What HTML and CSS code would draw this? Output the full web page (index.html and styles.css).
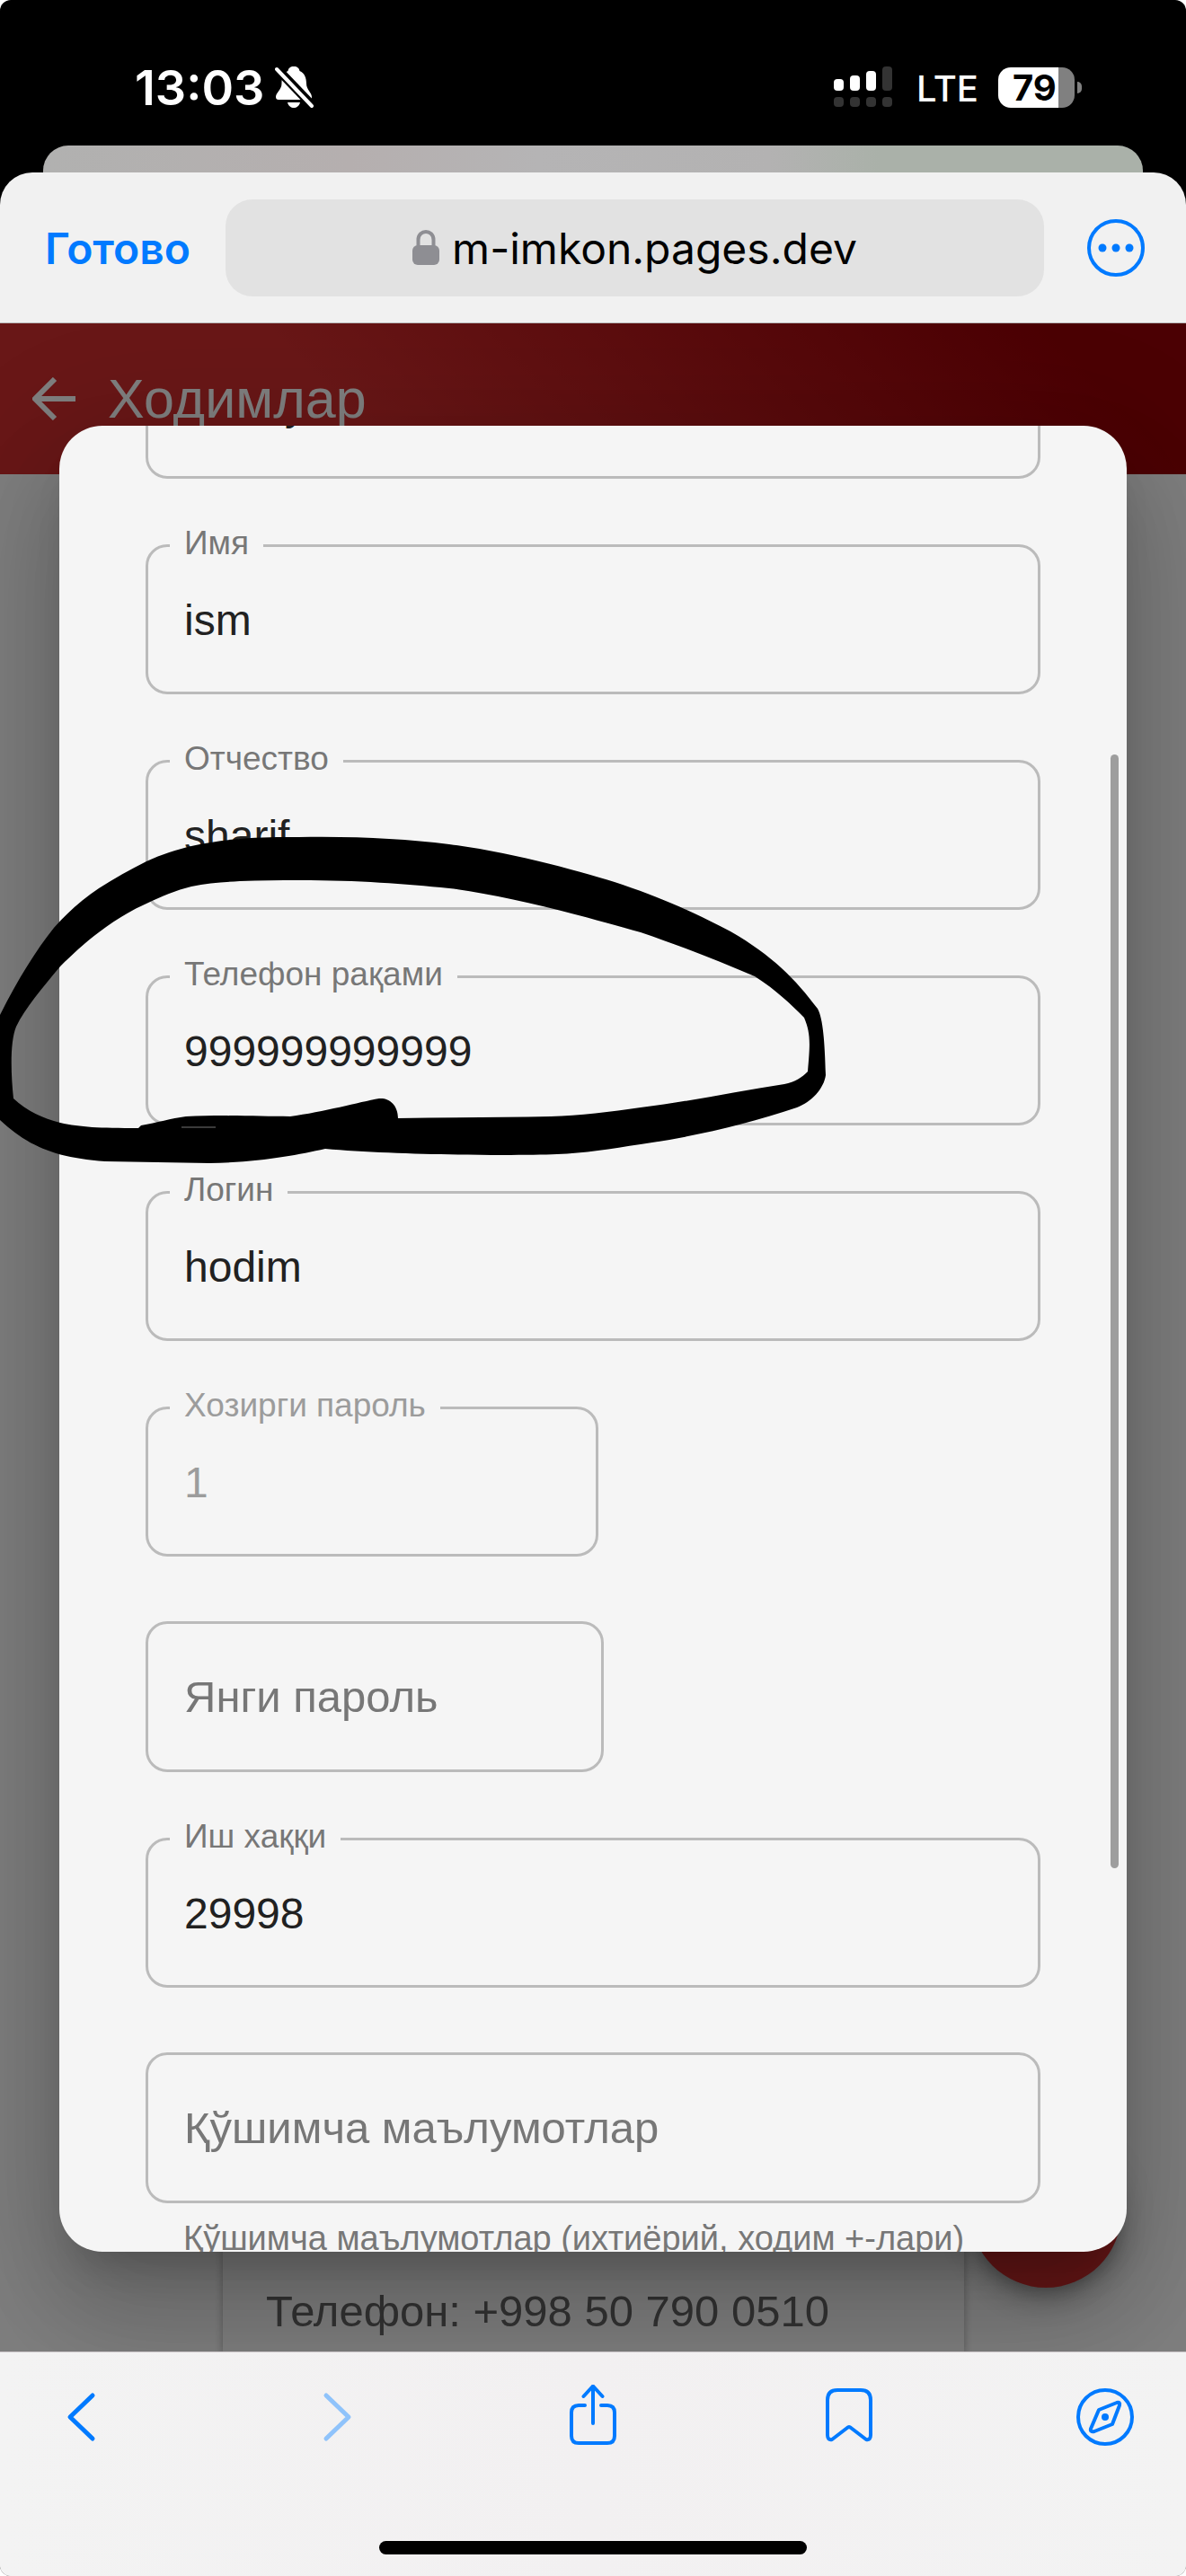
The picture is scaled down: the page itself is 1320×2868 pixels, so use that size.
FILE: index.html
```html
<!DOCTYPE html>
<html lang="uz-Cyrl">
<head>
<meta charset="utf-8">
<meta name="viewport" content="width=device-width, initial-scale=1">
<title>Ходимлар</title>
<link rel="stylesheet" href="styles.css">
</head>
<body>
<div class="phone">
  <header class="status">
    <div class="status-side">
      <span class="clock">13:03</span>
      <svg class="bell" width="44" height="48" viewBox="0 0 44 48" aria-hidden="true">
        <path fill="#fff" d="M21 1c-4 0-6 2-6.500 5C9 8 7.500 14 7.500 20c0 7-6.500 10-6.500 15 0 2 1 3 3 3h34c2 0 3-1 3-3 0-5-6-8-6-15 0-6-2-12-7.500-14C27 3 25 1 21 1zM14 41h14c-1 4-4 6-7 6s-6-2-7-6z"/>
        <path stroke="#000" stroke-width="10" d="M0 1l44 46"/>
        <path stroke="#fff" stroke-width="4" stroke-linecap="round" d="M2 4l39 41"/>
      </svg>
    </div>
    <div class="status-side">
      <svg class="signal" width="66" height="46" viewBox="0 0 66 46" aria-hidden="true">
        <g fill="#fff"><rect y="14" width="11" height="13" rx="4"/><rect x="18" y="10" width="11" height="17" rx="4"/><rect x="36" y="5" width="11" height="22" rx="4"/></g>
        <g fill="#333"><rect x="54" width="11" height="27" rx="4"/><rect y="34" width="11" height="11" rx="4"/><rect x="18" y="34" width="11" height="11" rx="4"/><rect x="36" y="34" width="11" height="11" rx="4"/><rect x="54" y="34" width="11" height="11" rx="4"/></g>
      </svg>
      <span class="network">LTE</span>
      <span class="battery"><span class="battery-level">79</span></span>
    </div>
  </header>
  <div class="sheet-behind"></div>

  <div class="sheet">
    <nav class="browser-bar">
      <button class="done" type="button">Готово</button>
      <button class="address" type="button">
        <svg width="30" height="40" viewBox="0 0 30 40" aria-hidden="true">
          <rect y="17" width="30" height="22" rx="6" fill="#8e8e93"/>
          <path d="M6.500 19v-8c0-12 17-12 17 0v8" fill="none" stroke="#8e8e93" stroke-width="4"/>
        </svg>
        <span>m-imkon.pages.dev</span>
      </button>
      <button class="icon-button" type="button" aria-label="Меню">
        <svg width="64" height="64" viewBox="0 0 64 64" aria-hidden="true">
          <circle cx="32" cy="32" r="30" fill="none" stroke="#007aff" stroke-width="4"/>
          <g fill="#007aff"><circle cx="17" cy="32" r="4.500"/><circle cx="32" cy="32" r="4.500"/><circle cx="47" cy="32" r="4.500"/></g>
        </svg>
      </button>
    </nav>

    <main class="page">
      <header class="app-bar">
        <button class="icon-button" type="button" aria-label="Орқага">
          <svg width="48" height="48" viewBox="0 0 48 48" aria-hidden="true"><path d="M48 24H4M25 2L3 24l22 22" fill="none" stroke="#fff" stroke-width="6"/></svg>
        </button>
        <h1>Ходимлар</h1>
      </header>
      <div class="employees">
        <article class="employee"><p>Телефон: +998 50 790 0510</p></article>
      </div>
      <button class="fab" type="button" aria-label="Қўшиш"></button>

      <div class="backdrop">
        <div class="dialog" role="dialog" aria-modal="true">
          <form class="form">
            <fieldset class="field">
              <legend><label for="surname">Фамилия</label></legend>
              <input id="surname" type="text" value="familiya">
            </fieldset>
            <fieldset class="field">
              <legend><label for="name">Имя</label></legend>
              <input id="name" type="text" value="ism">
            </fieldset>
            <fieldset class="field">
              <legend><label for="patronymic">Отчество</label></legend>
              <input id="patronymic" type="text" value="sharif">
            </fieldset>
            <fieldset class="field">
              <legend><label for="phone">Телефон рақами</label></legend>
              <input id="phone" type="tel" value="999999999999">
            </fieldset>
            <fieldset class="field">
              <legend><label for="login">Логин</label></legend>
              <input id="login" type="text" value="hodim">
            </fieldset>
            <fieldset class="field field-half" disabled>
              <legend><label for="password">Хозирги пароль</label></legend>
              <input id="password" type="text" value="1">
            </fieldset>
            <fieldset class="field field-empty field-half-wide">
              <input type="text" aria-label="Янги пароль" placeholder="Янги пароль">
            </fieldset>
            <fieldset class="field">
              <legend><label for="salary">Иш хаққи</label></legend>
              <input id="salary" type="text" value="29998">
            </fieldset>
            <fieldset class="field field-empty">
              <input type="text" aria-label="Қўшимча маълумотлар" aria-describedby="notes-help" placeholder="Қўшимча маълумотлар">
            </fieldset>
            <p class="helper" id="notes-help">Қўшимча маълумотлар (ихтиёрий, ходим +-лари)</p>
          </form>
          <span class="scroll-thumb"></span>
        </div>
      </div>

      <svg class="marker" width="930" height="380" viewBox="0 920 930 380" aria-hidden="true">
        <path fill-rule="evenodd" d="M0 1130C20 1090 40 1058 60 1033C75 1016 92 1001 110 989C127 978 145 968 163 959C180 951 197 946 213 942C231 938 250 935 267 934C290 932 310 932 333 932C400 931 450 934 500 940C570 949 650 971 693 985C740 1001 775 1017 813 1037C860 1064 885 1090 910 1123C916 1134 918 1160 919 1197C917 1212 903 1227 887 1233C830 1252 770 1266 713 1274C680 1279 650 1284 620 1285C570 1287 440 1286 362 1279C330 1286 290 1294 233 1295L117 1293C60 1289 30 1275 0 1247Z
        M15 1223C12 1195 11 1160 18 1143C28 1122 48 1099 67 1076C80 1063 95 1049 110 1038C127 1025 145 1014 163 1006C180 998 196 991 213 987C231 983 250 982 267 981C290 980 310 980 333 980C400 980 450 984 500 989C560 996 650 1020 713 1038C760 1054 800 1070 840 1087C865 1103 880 1118 895 1133C902 1150 902 1160 899 1193C893 1199 885 1205 873 1207C820 1215 770 1226 713 1233C680 1238 645 1242 613 1243C560 1244 500 1244 443 1245C443 1230 433 1222 422 1223C400 1227 360 1238 323 1243C290 1243 250 1241 207 1243C190 1245 175 1250 157 1253L154 1256C110 1256 90 1255 67 1250C48 1245 30 1237 15 1223Z"/>
        <path d="M202 1255H240" stroke="#777" stroke-width="1"/>
      </svg>
    </main>

    <footer class="toolbar">
      <div class="tools">
        <button class="icon-button" type="button" aria-label="Назад">
          <svg width="64" height="72" viewBox="0 0 64 72" aria-hidden="true"><path d="M45 12L20 36l25 24" fill="none" stroke="#007aff" stroke-width="5" stroke-linecap="round" stroke-linejoin="round"/></svg>
        </button>
        <button class="icon-button" type="button" aria-label="Вперёд" disabled>
          <svg width="64" height="72" viewBox="0 0 64 72" aria-hidden="true"><path d="M20 12l25 24-25 24" fill="none" stroke="#8fc3fb" stroke-width="5" stroke-linecap="round" stroke-linejoin="round"/></svg>
        </button>
        <button class="icon-button" type="button" aria-label="Поделиться">
          <svg width="64" height="72" viewBox="0 0 64 72" aria-hidden="true"><path d="M23 23h-7q-8 0-8 8v26q0 8 8 8h32q8 0 8-8V31q0-8-8-8h-7M32 43V2M21.500 13L32 1.500 42.500 13" fill="none" stroke="#007aff" stroke-width="4" stroke-linecap="round" stroke-linejoin="round"/></svg>
        </button>
        <button class="icon-button" type="button" aria-label="Закладки">
          <svg width="64" height="72" viewBox="0 0 64 72" aria-hidden="true"><path d="M8 17q0-11 11-11h26q11 0 11 11v39q0 6-5 5L34 48q-2-2-4 0L13 61q-5 1-5-5z" fill="none" stroke="#007aff" stroke-width="4" stroke-linejoin="round"/></svg>
        </button>
        <button class="icon-button" type="button" aria-label="Открыть в Safari">
          <svg width="64" height="72" viewBox="0 0 64 72" aria-hidden="true">
            <circle cx="32" cy="36" r="30" fill="none" stroke="#007aff" stroke-width="4"/>
            <path d="M25 28l20-8q4-1 3 3l-8 21-20 8q-5 1-4-3z" fill="none" stroke="#007aff" stroke-width="4" stroke-linejoin="round"/>
            <circle cx="32" cy="36" r="4" fill="#007aff"/>
          </svg>
        </button>
      </div>
      <div class="home-indicator"></div>
    </footer>
  </div>
</div>
</body>
</html>
```
FILE: styles.css
```css
* { box-sizing: border-box; }

body {
  margin: 0;
  background: #fff;
  font-family: "Liberation Sans", Arial, sans-serif;
}

button {
  border: 0;
  padding: 0;
  background: none;
  font: inherit;
  color: inherit;
}

svg { display: block; }

.phone {
  display: flex;
  flex-direction: column;
  min-height: 100vh;
  background: #000;
  border-radius: 12px;
  overflow: hidden;
}

/* status bar */
.status {
  display: flex;
  justify-content: space-between;
  padding: 66px 124px 34px 150px;
  font-family: Inter, sans-serif;
  color: #fff;
}

.status-side {
  display: flex;
  align-items: center;
  height: 62px;
}

.clock {
  font-size: 54px;
  font-weight: 600;
}

.bell { margin-left: 12px; }

.network {
  margin: 4px 22px 0 26px;
  font-size: 40px;
  line-height: 50px;
  font-weight: 500;
}

.battery {
  position: relative;
  width: 85px;
  height: 45px;
  border-radius: 14px;
  background: linear-gradient(to right, #fff 67px, #808080 67px);
}

.battery::after {
  content: "";
  position: absolute;
  left: 88px;
  top: 16px;
  width: 5px;
  height: 13px;
  border-radius: 0 5px 5px 0;
  background: #808080;
}

.battery-level {
  display: block;
  padding-left: 16px;
  font-size: 40px;
  line-height: 45px;
  font-weight: 700;
  color: #000;
}

.sheet-behind {
  height: 60px;
  margin: 0 48px -30px;
  border-radius: 28px 28px 0 0;
  background: linear-gradient(to right, #b1b1b0, #b5afaf 28%, #b5b4b5 45%, #b3b2b2 66%, #aab1a9 76%);
}

.sheet {
  position: relative;
  flex: 1;
  display: flex;
  flex-direction: column;
  border-radius: 36px 36px 0 0;
  background: #f1f1f1;
  overflow: hidden;
}

/* browser bar */
.browser-bar {
  display: flex;
  align-items: center;
  gap: 36px;
  padding: 30px 46px 29px 50px;
  border-bottom: 1px solid #b9b9b9;
  font-family: Inter, sans-serif;
}

.done {
  flex: 0 0 165px;
  text-align: left;
  font-size: 48px;
  font-weight: 600;
  color: #007aff;
}

.address {
  flex: 1;
  display: flex;
  align-items: center;
  justify-content: center;
  gap: 14px;
  height: 108px;
  border-radius: 30px;
  background: #e2e2e2;
  font-size: 48px;
  color: #000;
}

.browser-bar .icon-button { margin-left: 12px; }

/* web page */
.page {
  position: relative;
  flex: 1;
  display: flex;
  flex-direction: column;
  background: #fff;
  overflow: hidden;
}

.app-bar {
  display: flex;
  align-items: center;
  gap: 36px;
  height: 168px;
  padding: 0 36px;
  background: linear-gradient(45deg, #d32f2f 30%, #960006 90%);
  color: #fff;
}

.app-bar h1 {
  margin: 0;
  font-size: 61px;
  font-weight: 400;
}

.employees {
  flex: 1;
  display: flex;
  flex-direction: column;
  justify-content: flex-end;
  padding: 0 247px 0 248px;
}

.employee {
  padding: 200px 48px 12px;
  box-shadow: 0 3px 9px rgba(0, 0, 0, .3);
  background: #fff;
}

.employee p {
  margin: 0;
  font-size: 49px;
  line-height: 66px;
  color: #666;
  white-space: nowrap;
}

.fab {
  position: absolute;
  right: 72px;
  bottom: 71px;
  width: 168px;
  height: 168px;
  border-radius: 50%;
  background: #d32f2f;
  box-shadow: 0 9px 15px -3px rgba(0, 0, 0, .2), 0 18px 30px rgba(0, 0, 0, .14), 0 3px 54px rgba(0, 0, 0, .12);
}

/* dialog */
.backdrop {
  position: absolute;
  inset: 0;
  display: flex;
  padding: 114px 66px 111px;
  background: rgba(0, 0, 0, .5);
}

.dialog {
  position: relative;
  flex: 1;
  border-radius: 48px;
  background: #f5f5f5;
  box-shadow: 0 33px 45px -21px rgba(0, 0, 0, .2), 0 72px 114px 9px rgba(0, 0, 0, .14), 0 27px 138px 24px rgba(0, 0, 0, .12);
  overflow: hidden;
}

/* the form is scrolled part of the way down */
.form {
  display: flex;
  flex-direction: column;
  gap: 52px;
  margin-top: -129px;
  padding: 0 96px;
}

.field {
  min-width: 0;
  margin: 0;
  padding: 0 24px 19px;
  border: 3px solid #bbb;
  border-radius: 24px;
}

.field legend {
  padding: 0 16px 4px;
  font-size: 37px;
  line-height: 40px;
  color: #777;
}

.field input {
  display: block;
  width: 100%;
  height: 122px;
  padding: 0 16px;
  border: 0;
  outline: 0;
  background: none;
  font: 48px "Liberation Sans", Arial, sans-serif;
  color: #212121;
}

.field input::placeholder {
  color: #777;
  opacity: 1;
}

.field:disabled legend,
.field:disabled input { color: #9c9c9c; }

.field-half { width: 504px; }

.field-half-wide { width: 510px; }

.field-empty {
  margin-top: 20px;
  padding-bottom: 0;
}

.field-empty input {
  height: 162px;
  font-size: 49px;
}

.helper {
  margin: -43px 0 0;
  padding: 0 42px;
  font-size: 38px;
  line-height: 60px;
  white-space: nowrap;
  color: #777;
}

.scroll-thumb {
  position: absolute;
  top: 18%;
  bottom: 21%;
  right: 9px;
  width: 9px;
  border-radius: 5px;
  background: #9e9e9e;
}

.marker {
  position: absolute;
  left: 0;
  top: 560px;
}

/* bottom toolbar */
.toolbar {
  padding-bottom: 24px;
  border-top: 1px solid #c6c1c4;
  border-radius: 0 0 12px 12px;
  background: linear-gradient(to right, #f3f3f3, #f2f0f1 50%, #f3f3f3);
}

.tools {
  display: flex;
  justify-content: space-between;
  padding: 36px 58px 102px;
}

.home-indicator {
  width: 36%;
  height: 15px;
  margin: 0 auto;
  border-radius: 8px;
  background: #000;
}
```
